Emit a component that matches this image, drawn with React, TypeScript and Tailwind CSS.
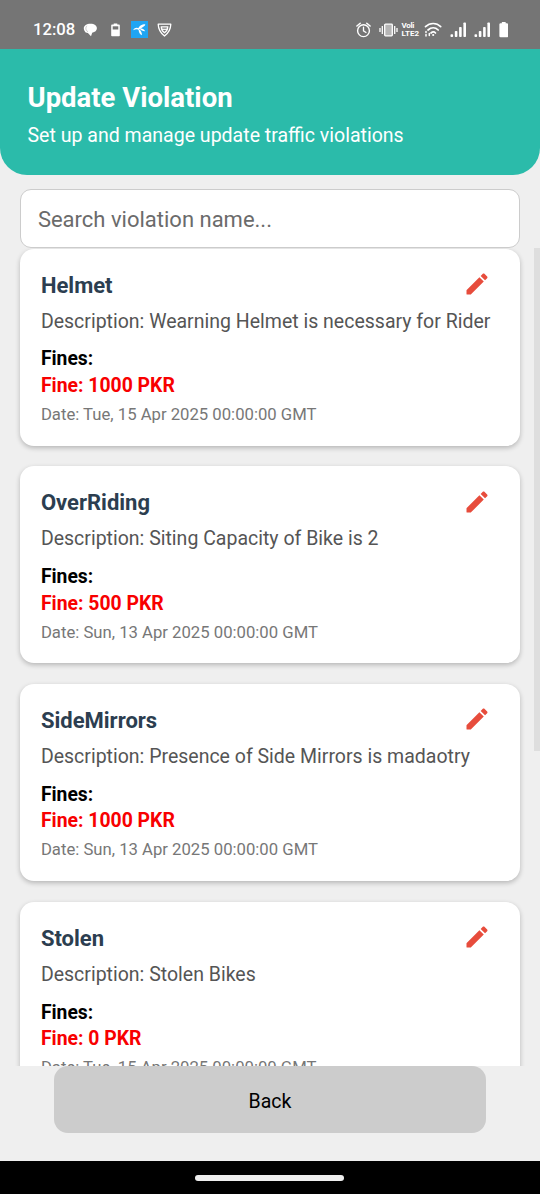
import React from "react";

interface Violation {
  name: string;
  description: string;
  fine: number;
  date: string;
}

const violations: Violation[] = [
  { name: "Helmet", description: "Wearning Helmet is necessary for Rider", fine: 1000, date: "Tue, 15 Apr 2025 00:00:00 GMT" },
  { name: "OverRiding", description: "Siting Capacity of Bike is 2", fine: 500, date: "Sun, 13 Apr 2025 00:00:00 GMT" },
  { name: "SideMirrors", description: "Presence of Side Mirrors is madaotry", fine: 1000, date: "Sun, 13 Apr 2025 00:00:00 GMT" },
  { name: "Stolen", description: "Stolen Bikes", fine: 0, date: "Tue, 15 Apr 2025 00:00:00 GMT" },
];

const EditIcon = () => (
  <svg width="28" height="28" viewBox="0 0 24 24" fill="#e74c3c">
    <path d="M3 17.460v3.040c0 .280.220.500.500.500h3.040c.130 0 .260-.050.350-.150L17.810 9.940l-3.750-3.750L3.150 17.100c-.100.100-.150.220-.150.360zM20.710 7.040c.390-.390.390-1.020 0-1.410l-2.340-2.340c-.390-.390-1.020-.390-1.410 0l-1.830 1.830 3.750 3.750 1.830-1.830z" />
  </svg>
);

const SignalBars = () => (
  <svg width="17" height="16" viewBox="0 0 17 16" fill="#fff">
    <rect x="0.5" y="12.3" width="2.6" height="2.7" rx="0.8" />
    <rect x="4.8" y="9" width="2.6" height="6" rx="0.8" />
    <rect x="9.1" y="5" width="2.6" height="10" rx="0.8" />
    <rect x="13.4" y="0.5" width="2.6" height="14.5" rx="0.8" />
  </svg>
);

const StatusBar = () => (
  <div className="flex h-[49px] shrink-0 items-center justify-between bg-[#757575] pt-[10px] pr-[32px] pl-[33px] text-white">
    <div className="flex items-center">
      <span className="w-[50px] text-[16.700px] leading-5 font-medium">12:08</span>
      {/* Chat bubbles */}
      <svg width="15" height="14" viewBox="0 0 15 14" fill="#fff">
        <path d="M7.500.800c3.900 0 6.400 1.900 6.400 4.500 0 2.300-1.900 4-4.700 4.400L8 13.200 4.900 10 2.700 9.400C1.600 8.500.800 7 .800 5.300.800 2.700 3.600.800 7.500.800z" />
        <path d="M4 2.800C2.200 4.700 2.600 7.300 5 8.800" fill="none" stroke="#a8a8a8" strokeWidth="0.600" />
      </svg>
      {/* Battery */}
      <svg className="ml-[13px]" width="9" height="14" viewBox="0 0 9 14">
        <path d="M2.700 1.500V.500h3.600v1H8a.8.800 0 0 1 .8.800v10.200a.8.800 0 0 1-.8.800H1a.8.800 0 0 1-.8-.8V2.300a.8.800 0 0 1 .8-.8z" fill="#fff" />
        <path d="M1.700 3.300h5.600v3.200H1.700z" fill="#757575" />
      </svg>
      {/* Carrier logo */}
      <svg className="ml-[11px]" width="17" height="17" viewBox="0 0 17 17">
        <rect width="17" height="17" fill="#1fa5f3" />
        <path d="M7.200 8C7.700 5.300 10.700 3.300 14.300 3.300c.1 1.600-2.500 3-5.600 4.800z" fill="#fff" />
        <path d="M7.800 9C6.500 7.900 4.300 8.200 2.300 9.300 2.600 6.900 5.800 5.900 8.300 7.500z" fill="#fff" />
        <path d="M7.500 8c2 .500 3.400 3.200 3.500 6.200-2-.500-3.400-2.700-3.500-6.200z" fill="#fff" />
        <path d="M8.300 7.300c2.600-.200 4.900.900 5.900 2.900-2 .100-4.500-.900-5.900-2.900z" fill="#fff" />
      </svg>
      {/* Shield */}
      <svg className="ml-[9px]" width="15" height="14" viewBox="0 0 15 14" fill="none" stroke="#fff">
        <path d="M1.200 1.200h12.600c-.1 4.600-2.300 8.700-6.300 11.800C3.500 9.900 1.300 5.800 1.200 1.200z" strokeWidth="1.300" strokeLinejoin="round" />
        <path d="M4.300 3.900h6.400c0 2.400-1.200 4.300-3.200 5.800-2-1.500-3.200-3.400-3.200-5.800z" strokeWidth="1.300" />
        <path d="M4.500 6.300h6" strokeWidth="1.200" />
      </svg>
    </div>
    <div className="flex items-center">
      {/* Alarm */}
      <svg width="15" height="16" viewBox="0 0 15 16" fill="none" stroke="#fff" strokeLinecap="round">
        <circle cx="7.500" cy="8.700" r="5.900" strokeWidth="1.400" />
        <path d="M7.500 5.200v3.700l2.500 1.600" strokeWidth="1.300" />
        <path d="M.9 4 4.200 1.200M14.100 4l-3.300-2.800" strokeWidth="1.500" />
      </svg>
      {/* Vibrate */}
      <svg className="ml-[8px]" width="19" height="14" viewBox="0 0 19 14" fill="none" stroke="#fff">
        <rect x="5.700" y="1.200" width="7.600" height="11.600" rx="0.800" fill="#b5b5b5" strokeWidth="1.300" />
        <path d="M3.300 3v8M1 5v4M15.700 3v8M18 5v4" strokeWidth="1.300" />
      </svg>
      <div className="ml-[3.500px] flex w-[19px] flex-col text-[8px] leading-[9.500px] font-bold whitespace-nowrap">
        <span className="tracking-[-0.3px]">Voli</span>
        <span className="-mt-px">LTE2</span>
      </div>
      {/* Wifi */}
      <svg className="ml-[3px]" width="18" height="15" viewBox="0 0 18 15" fill="none" stroke="#fff" strokeLinecap="round">
        <path d="M1.500 4.700c4.500-4.300 11-4.300 15.200 0M4 8c3.200-2.900 7.300-2.900 10.200 0M7 11c1.500-1.300 3.300-1.300 4.500 0" strokeWidth="1.700" />
        <circle cx="9.200" cy="13" r="1.100" fill="#fff" stroke="none" />
        <path d="M2 9.500v1M2 12.500V14M5.300 11.500v2" strokeWidth="1.500" />
      </svg>
      <span className="ml-[8px]"><SignalBars /></span>
      <span className="ml-[7px]"><SignalBars /></span>
      <svg className="ml-[8px]" width="9.500" height="17" viewBox="0 0 10 17" fill="#fff">
        <path d="M3 .500h4v1.300h1.300A1.300 1.300 0 0 1 9.600 3v12.400a1.300 1.300 0 0 1-1.300 1.300H1.700a1.300 1.300 0 0 1-1.300-1.300V3a1.300 1.300 0 0 1 1.300-1.200H3z" />
      </svg>
    </div>
  </div>
);

const ViolationCard = ({ violation }: { violation: Violation }) => (
  <div className="h-[197px] shrink-0 rounded-[14px] bg-white px-[20.500px] pt-[20.500px] shadow-[0_2px_5px_rgba(0,0,0,0.24)]">
    <div className="flex h-[31px] items-center justify-between pr-[8px]">
      <h2 className="pt-px text-[22px] font-bold text-[#2c3e50]">{violation.name}</h2>
      <button aria-label="Edit" className="pb-px">
        <EditIcon />
      </button>
    </div>
    <p className="mt-[8.800px] text-[19.500px] leading-[26px] whitespace-nowrap text-[#555]">
      Description: {violation.description}
    </p>
    <p className="mt-[11.700px] text-[19.300px] leading-[26.500px] font-bold text-black">Fines:</p>
    <p className="text-[19.400px] leading-[26.500px] font-bold text-[#f80000]">Fine: {violation.fine} PKR</p>
    <p className="mt-[4.500px] text-[16.700px] leading-[22px] text-[#777]">Date: {violation.date}</p>
  </div>
);

const App = () => {
  return (
    <div className="flex h-[1194px] w-[540px] flex-col overflow-hidden bg-[#efefef] font-['Roboto',sans-serif]">
      <StatusBar />

      {/* Header */}
      <header className="h-[126px] shrink-0 rounded-b-[27px] bg-[#2bbbaa] px-[27.500px] pt-[31px] text-white">
        <h1 className="text-[27.500px] leading-[36px] font-bold">Update Violation</h1>
        <p className="mt-[7px] text-[19.540px] leading-[26px]">Set up and manage update traffic violations</p>
      </header>

      {/* Search */}
      <div className="mx-[20.400px] mt-[14px] h-[59px] shrink-0">
        <input
          type="text"
          placeholder="Search violation name..."
          className="h-full w-full rounded-[11px] border border-[#ccc] bg-white px-[16.500px] pt-[2px] text-[22px] placeholder:text-[#6b6b6b]"
        />
      </div>

      {/* Violation list */}
      <div className="relative h-[818px] shrink-0 overflow-hidden px-[20.400px]">
        <div className="flex flex-col gap-[20.700px] pt-[0.500px]">
          {violations.map((violation) => (
            <ViolationCard key={violation.name} violation={violation} />
          ))}
        </div>
        <div className="absolute top-0 right-0 h-[503px] w-[6px] bg-[#dedede]" />
      </div>

      <div className="flex-1">
        <button className="mx-auto block h-[67px] w-[432px] rounded-[14px] bg-[#ccc] pt-[4px] text-[19.540px] text-black">
          Back
        </button>
      </div>

      {/* Gesture bar */}
      <div className="flex h-[33px] shrink-0 items-center justify-center bg-black pr-px">
        <div className="h-[6px] w-[149px] rounded-full bg-[#eee]" />
      </div>
    </div>
  );
};

export default App;
